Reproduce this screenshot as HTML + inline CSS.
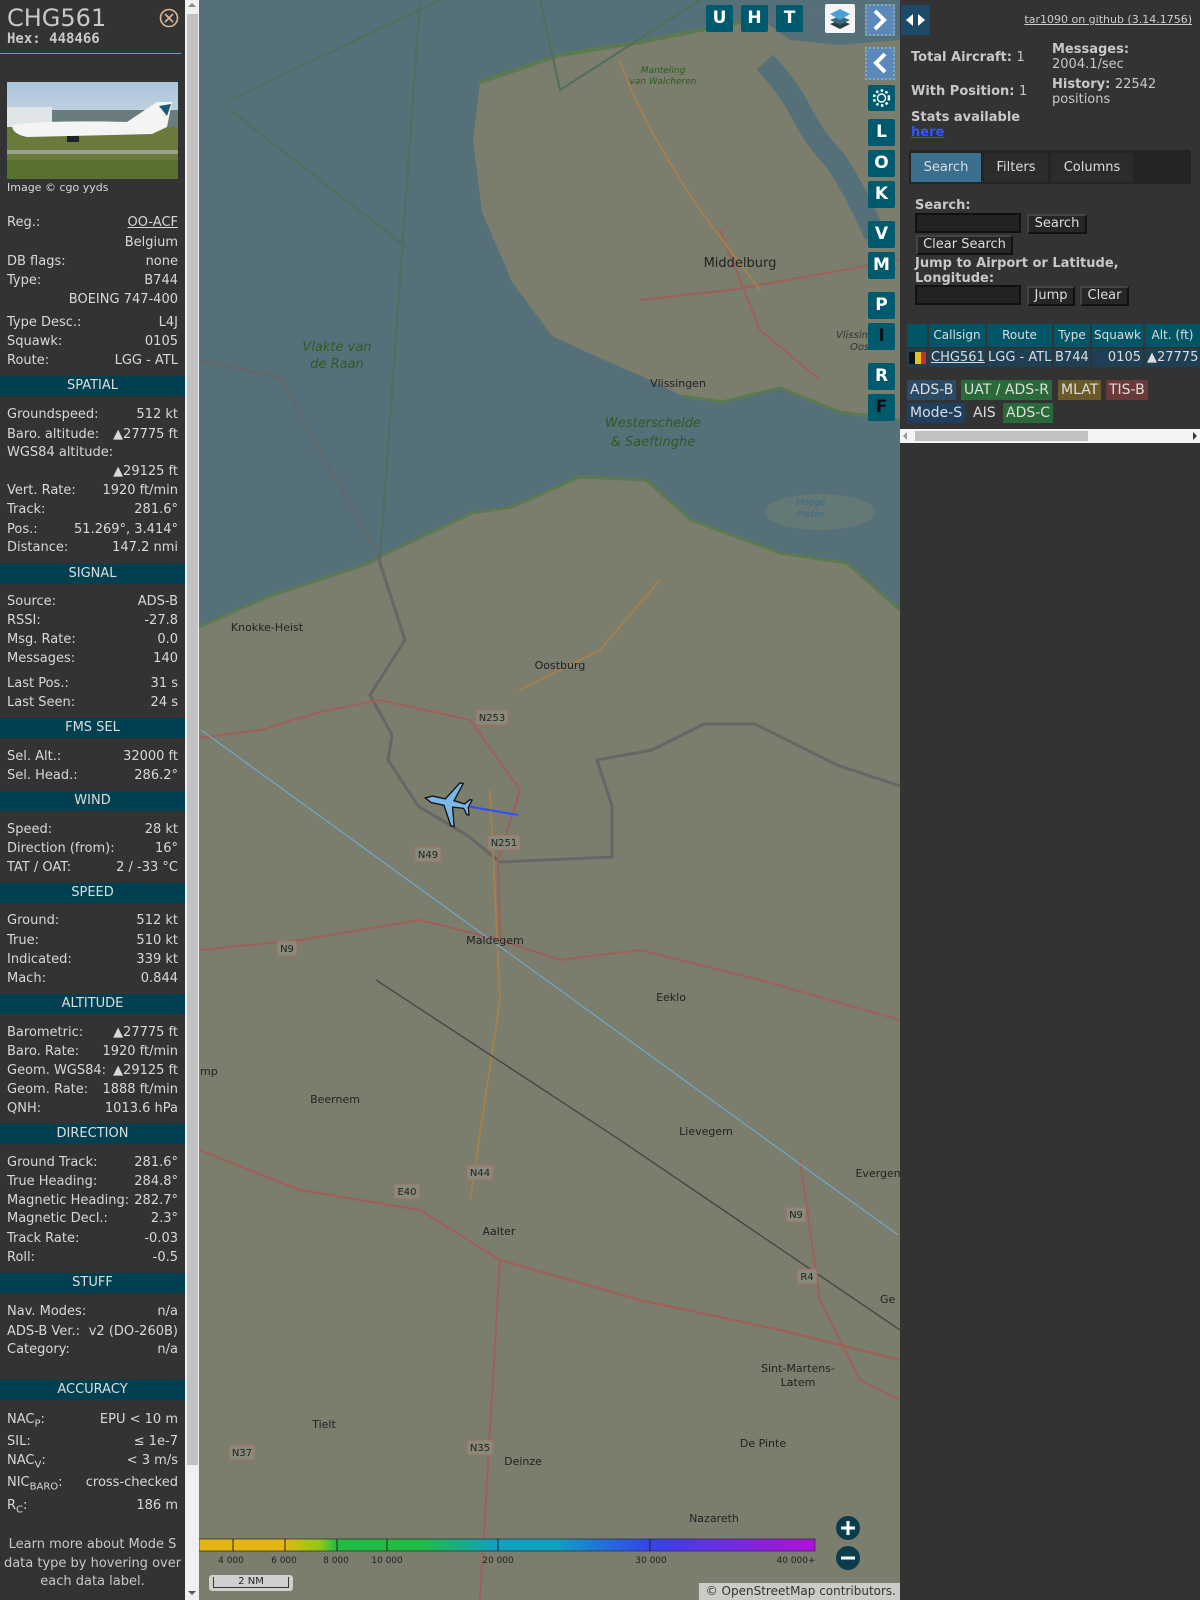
<!DOCTYPE html>
<html><head><meta charset="utf-8">
<style>
*{box-sizing:border-box;margin:0;padding:0}
body{width:1200px;height:1600px;overflow:hidden;background:#333;font-family:"DejaVu Sans","Liberation Sans",sans-serif;font-size:13px;color:#d8d8d8;position:relative}
#left{position:absolute;left:0;top:0;width:185px;height:1600px;background:#333}
#sb{position:absolute;left:185px;top:0;width:14px;height:1600px;background:#f0f0f0}
#sb .th{position:absolute;left:2px;right:1px;top:14px;height:1451px;background:#c1c1c1}
.r{position:absolute;left:7px;width:171px;height:18px;line-height:22px;white-space:nowrap}
.r b{font-weight:normal;float:right}
.h{position:absolute;left:0;width:185px;height:20px;line-height:20px;background:#004050;text-align:center;color:#ddd}
#map{position:absolute;left:199px;top:0;width:701px;height:1600px;overflow:hidden;background:#7b7d6d}
.mb{position:absolute;width:27px;height:27px;background:#005a6e;color:#fff;font-weight:bold;font-size:17px;text-align:center;line-height:27px;border-radius:2px}
#right{position:absolute;left:900px;top:0;width:300px;height:1600px;background:#333}
.bl{position:absolute;font-weight:bold;color:#c8c8c8;font-size:13px;line-height:15px}
.btn{position:absolute;background:#262626;color:#ddd;border:2px solid #111;border-top-color:#444;border-left-color:#444;font-size:13px;text-align:center;line-height:16px}
.inp{position:absolute;background:#222;border:2px solid #111;}
.badge{position:absolute;height:20px;line-height:20px;font-size:14px;color:#ddd;padding:0 3px}
.th2{position:absolute;top:324px;height:23px;line-height:23px;background:#005566;color:#ddd;text-align:center;font-size:12px}
.td{position:absolute;top:349px;height:18px;line-height:18px;background:#1f3f55;color:#ddd;font-size:13px}
</style></head><body>

<div id="left">
 <div style="position:absolute;left:7px;top:3px;font-size:24px;color:#c8c8c8;line-height:30px">CHG561</div>
 <div style="position:absolute;left:7px;top:31px;font-family:'DejaVu Sans Mono',monospace;font-weight:bold;font-size:14px;color:#c8c8c8">Hex: 448466</div>
 <svg style="position:absolute;left:159px;top:8px" width="20" height="20"><circle cx="10" cy="10" r="8.5" fill="none" stroke="#d9b896" stroke-width="1.6"/><path d="M6 6L14 14M14 6L6 14" stroke="#d9b896" stroke-width="1.6"/></svg>
 <div style="position:absolute;left:0;top:53px;width:181px;height:1px;background:#5aa0d0"></div>
 <svg style="position:absolute;left:7px;top:82px" width="171" height="97">
  <defs><linearGradient id="sky" x1="0" y1="0" x2="0" y2="1"><stop offset="0" stop-color="#aac4dc"/><stop offset="1" stop-color="#c8d6e0"/></linearGradient></defs>
  <rect width="171" height="40" fill="url(#sky)"/>
  <rect y="25" width="45" height="20" fill="#dfe4e6"/><rect x="45" y="28" width="126" height="17" fill="#6a7c7e"/>
  <rect y="45" width="171" height="52" fill="#6a7a3c"/>
  <rect y="68" width="171" height="4" fill="#9aa090"/><rect y="78" width="171" height="19" fill="#587030"/>
  <path d="M5 43 Q40 38 120 40 L150 20 L165 20 L160 45 L145 52 L20 55 Q5 52 5 43Z" fill="#f4f4f4"/>
  <path d="M152 24 L164 22 L160 34 Z" fill="#1a5a70"/>
  <rect x="60" y="54" width="12" height="6" fill="#222"/>
 </svg>
 <div style="position:absolute;left:7px;top:181px;font-size:11px;color:#d8d8d8">Image © cgo yyds</div>

 <div class="r" style="top:212px">Reg.:<b style="text-decoration:underline">OO-ACF</b></div>
 <div class="r" style="top:232px"><b>Belgium</b></div>
 <div class="r" style="top:251px">DB flags:<b>none</b></div>
 <div class="r" style="top:270px">Type:<b>B744</b></div>
 <div class="r" style="top:289px"><b>BOEING 747-400</b></div>
 <div class="r" style="top:312px">Type Desc.:<b>L4J</b></div>
 <div class="r" style="top:331px">Squawk:<b>0105</b></div>
 <div class="r" style="top:350px">Route:<b>LGG - ATL</b></div>
 <div class="h" style="top:376px">SPATIAL</div>
 <div class="r" style="top:404px">Groundspeed:<b>512 kt</b></div>
 <div class="r" style="top:424px">Baro. altitude:<b>▲27775 ft</b></div>
 <div class="r" style="top:442px">WGS84 altitude:</div>
 <div class="r" style="top:461px"><b>▲29125 ft</b></div>
 <div class="r" style="top:480px">Vert. Rate:<b>1920 ft/min</b></div>
 <div class="r" style="top:499px">Track:<b>281.6°</b></div>
 <div class="r" style="top:519px">Pos.:<b>51.269°, 3.414°</b></div>
 <div class="r" style="top:537px">Distance:<b>147.2 nmi</b></div>
 <div class="h" style="top:564px">SIGNAL</div>
 <div class="r" style="top:591px">Source:<b>ADS-B</b></div>
 <div class="r" style="top:610px">RSSI:<b>-27.8</b></div>
 <div class="r" style="top:629px">Msg. Rate:<b>0.0</b></div>
 <div class="r" style="top:648px">Messages:<b>140</b></div>
 <div class="r" style="top:673px">Last Pos.:<b>31 s</b></div>
 <div class="r" style="top:692px">Last Seen:<b>24 s</b></div>
 <div class="h" style="top:718px">FMS SEL</div>
 <div class="r" style="top:746px">Sel. Alt.:<b>32000 ft</b></div>
 <div class="r" style="top:765px">Sel. Head.:<b>286.2°</b></div>
 <div class="h" style="top:791px">WIND</div>
 <div class="r" style="top:819px">Speed:<b>28 kt</b></div>
 <div class="r" style="top:838px">Direction (from):<b>16°</b></div>
 <div class="r" style="top:857px">TAT / OAT:<b>2 / -33 °C</b></div>
 <div class="h" style="top:883px">SPEED</div>
 <div class="r" style="top:910px">Ground:<b>512 kt</b></div>
 <div class="r" style="top:930px">True:<b>510 kt</b></div>
 <div class="r" style="top:949px">Indicated:<b>339 kt</b></div>
 <div class="r" style="top:968px">Mach:<b>0.844</b></div>
 <div class="h" style="top:994px">ALTITUDE</div>
 <div class="r" style="top:1022px">Barometric:<b>▲27775 ft</b></div>
 <div class="r" style="top:1041px">Baro. Rate:<b>1920 ft/min</b></div>
 <div class="r" style="top:1060px">Geom. WGS84:<b>▲29125 ft</b></div>
 <div class="r" style="top:1079px">Geom. Rate:<b>1888 ft/min</b></div>
 <div class="r" style="top:1098px">QNH:<b>1013.6 hPa</b></div>
 <div class="h" style="top:1124px">DIRECTION</div>
 <div class="r" style="top:1152px">Ground Track:<b>281.6°</b></div>
 <div class="r" style="top:1171px">True Heading:<b>284.8°</b></div>
 <div class="r" style="top:1190px">Magnetic Heading:<b>282.7°</b></div>
 <div class="r" style="top:1208px">Magnetic Decl.:<b>2.3°</b></div>
 <div class="r" style="top:1228px">Track Rate:<b>-0.03</b></div>
 <div class="r" style="top:1247px">Roll:<b>-0.5</b></div>
 <div class="h" style="top:1273px">STUFF</div>
 <div class="r" style="top:1301px">Nav. Modes:<b>n/a</b></div>
 <div class="r" style="top:1321px">ADS-B Ver.:<b>v2 (DO-260B)</b></div>
 <div class="r" style="top:1339px">Category:<b>n/a</b></div>
 <div class="h" style="top:1380px">ACCURACY</div>
 <div class="r" style="top:1409px">NAC<sub style="font-size:10px">P</sub>:<b>EPU &lt; 10 m</b></div>
 <div class="r" style="top:1431px">SIL:<b>≤ 1e-7</b></div>
 <div class="r" style="top:1450px">NAC<sub style="font-size:10px">V</sub>:<b>&lt; 3 m/s</b></div>
 <div class="r" style="top:1472px">NIC<sub style="font-size:10px">BARO</sub>:<b>cross-checked</b></div>
 <div class="r" style="top:1495px">R<sub style="font-size:10px">C</sub>:<b>186 m</b></div>
 <div style="position:absolute;left:0;top:1536px;width:185px;text-align:center;line-height:18.5px;color:#c8c8c8">Learn more about Mode S data type by hovering over each data label.</div>
</div>
<div id="sb"><div class="th"></div>
 <div style="position:absolute;left:3px;top:3px;border:4px solid transparent;border-bottom:4px solid #888;border-top:0"></div>
 <div style="position:absolute;left:3px;top:1591px;border:4px solid transparent;border-top:4px solid #555;border-bottom:0"></div>
</div>

<div id="map">
<svg width="701" height="1600" viewBox="199 0 701 1600" style="position:absolute;left:0;top:0">
 <path d="M199 0 H900 V610 L847 563 L780 553 L691 520 L646 480 L579 477 L512 507 L472 513 L379 557 L370 563 L267 597 L199 627 Z" fill="#56707a"/>
 <path d="M480 82 L560 55 L640 42 L700 30 L760 18 L830 10 L900 6 V420 L840 412 L780 388 L722 402 L682 396 L650 380 L595 356 L552 336 L512 282 L482 212 L473 140 Z" fill="#7b7d6d"/>
 <path d="M765 62 Q790 90 800 110 Q815 140 835 160 Q855 190 875 235" fill="none" stroke="#56707a" stroke-width="22"/>
 <path d="M760 18 L830 10 L900 6 V40 L840 45 L790 40Z" fill="#56707a"/>
 <path d="M480 82 L560 55 L640 42 L700 30 L760 18" fill="none" stroke="#5c7a50" stroke-width="4"/>
 <path d="M900 420 L840 412 L780 388 L722 402 L682 396" fill="none" stroke="#5c7a50" stroke-width="3"/>
 <path d="M900 610 L847 563 L780 553 L691 520 L646 480 L579 477 L512 507 L472 513 L379 557 L370 563 L267 597 L199 627" fill="none" stroke="#5c7a50" stroke-width="3"/>
 <ellipse cx="820" cy="512" rx="55" ry="18" fill="#667a74" opacity=".9"/>
 <path d="M420 0 L380 560 M230 100 L440 0 M230 110 L410 250 M540 0 L560 90 L700 0" fill="none" stroke="#4f6e5c" stroke-width="2"/>
 <path d="M199 360 L280 378 L380 560" fill="none" stroke="#666" stroke-width="2"/>
 <path d="M378 557 L405 640 L370 695 L392 735 L388 760 L418 806 L468 836 L500 862 L612 857 L612 806 L597 760 L652 750 L704 724 L755 724 L837 765 L900 786" fill="none" stroke="#666" stroke-width="3"/>
 <path d="M199 738 L260 730 L320 712 L380 700 L470 720 L520 790 L498 860 L500 940 L560 960 L640 950 L760 980 L900 1020" fill="none" stroke="#a0605a" stroke-width="2"/>
 <path d="M199 950 L300 940 L420 920 L500 940" fill="none" stroke="#a0605a" stroke-width="2"/>
 <path d="M199 1150 L300 1190 L420 1210 L500 1260 L640 1300 L780 1330 L900 1360" fill="none" stroke="#a0605a" stroke-width="2.2"/>
 <path d="M500 1260 L480 1600 M800 1160 L820 1300 L860 1380 L900 1400" fill="none" stroke="#a0605a" stroke-width="2"/>
 <path d="M720 230 L760 330 L820 380 M640 300 L730 290 L900 260" fill="none" stroke="#a0605a" stroke-width="2"/>
 <path d="M520 690 L600 650 L660 580 M490 790 L500 1000 L470 1200" fill="none" stroke="#a8804c" stroke-width="1.8"/>
 <path d="M620 60 Q640 120 700 210 L760 290" fill="none" stroke="#a8804c" stroke-width="1.8"/>
 <path d="M376 980 L620 1140 L900 1330" fill="none" stroke="#444" stroke-width="1.3"/>
 <path d="M201 730 L898 1235" stroke="#6fb0e0" stroke-width="1"/>
 <path d="M449 803 L518 815" stroke="#3050ff" stroke-width="2"/>
 <g transform="translate(449,803) rotate(-78) scale(1.1)">
  <path d="M0 -22 L3 -16 L3 -4 L20 6 L20 9 L3 4 L2 14 L7 18 L7 20 L0 18 L-7 20 L-7 18 L-2 14 L-3 4 L-20 9 L-20 6 L-3 -4 L-3 -16 Z" fill="#7ab8e8" stroke="#111" stroke-width="1.2"/>
 </g>
 <g font-family="DejaVu Sans,sans-serif" font-size="11" fill="#222">
  <text x="740" y="267" text-anchor="middle" font-size="13">Middelburg</text>
  <text x="678" y="387" text-anchor="middle">Vlissingen</text>
  <text x="560" y="669" text-anchor="middle">Oostburg</text>
  <text x="267" y="631" text-anchor="middle">Knokke-Heist</text>
  <text x="495" y="944" text-anchor="middle">Maldegem</text>
  <text x="671" y="1001" text-anchor="middle">Eeklo</text>
  <text x="335" y="1103" text-anchor="middle">Beernem</text>
  <text x="706" y="1135" text-anchor="middle">Lievegem</text>
  <text x="499" y="1235" text-anchor="middle">Aalter</text>
  <text x="798" y="1372" text-anchor="middle">Sint-Martens-</text>
  <text x="798" y="1386" text-anchor="middle">Latem</text>
  <text x="324" y="1428" text-anchor="middle">Tielt</text>
  <text x="523" y="1465" text-anchor="middle">Deinze</text>
  <text x="763" y="1447" text-anchor="middle">De Pinte</text>
  <text x="714" y="1522" text-anchor="middle">Nazareth</text>
  <text x="880" y="1177" text-anchor="middle">Evergem</text>
  <text x="200" y="1075">mp</text>
  <text x="880" y="1303">Ge</text>
  <text x="836" y="338" font-style="italic" fill="#333" font-size="10">Vlissing</text>
  <text x="850" y="350" font-style="italic" fill="#333" font-size="10">Oos</text>
 </g>
 <g font-family="DejaVu Sans,sans-serif" font-style="italic" fill="#2e5a22" text-anchor="middle">
  <text x="337" y="351" font-size="13">Vlakte van</text>
  <text x="337" y="368" font-size="13">de Raan</text>
  <text x="653" y="427" font-size="13">Westerschelde</text>
  <text x="653" y="446" font-size="13">&amp; Saeftinghe</text>
  <text x="663" y="73" font-size="9">Manteling</text>
  <text x="663" y="84" font-size="9">van Walcheren</text>
  <text x="811" y="505" font-size="9" fill="#3a6a8a">Hooge</text>
  <text x="811" y="517" font-size="9" fill="#3a6a8a">Platen</text>
 </g>
 <g font-family="DejaVu Sans,sans-serif" font-size="10" fill="#222" text-anchor="middle">
  <g><rect x="476" y="710" width="32" height="15" rx="2" fill="#8a8a7a" stroke="#a07060"/><text x="492" y="721">N253</text></g>
  <g><rect x="488" y="835" width="32" height="15" rx="2" fill="#8a8a7a" stroke="#a07060"/><text x="504" y="846">N251</text></g>
  <g><rect x="415" y="847" width="26" height="15" rx="2" fill="#8a8a7a" stroke="#a07060"/><text x="428" y="858">N49</text></g>
  <g><rect x="277" y="941" width="20" height="15" rx="2" fill="#8a8a7a" stroke="#a07060"/><text x="287" y="952">N9</text></g>
  <g><rect x="467" y="1165" width="26" height="15" rx="2" fill="#8a8a7a" stroke="#a07060"/><text x="480" y="1176">N44</text></g>
  <g><rect x="394" y="1184" width="26" height="15" rx="2" fill="#8a8a7a" stroke="#a07060"/><text x="407" y="1195">E40</text></g>
  <g><rect x="786" y="1207" width="20" height="15" rx="2" fill="#8a8a7a" stroke="#a07060"/><text x="796" y="1218">N9</text></g>
  <g><rect x="797" y="1269" width="20" height="15" rx="2" fill="#8a8a7a" stroke="#a07060"/><text x="807" y="1280">R4</text></g>
  <g><rect x="467" y="1440" width="26" height="15" rx="2" fill="#8a8a7a" stroke="#a07060"/><text x="480" y="1451">N35</text></g>
  <g><rect x="229" y="1445" width="26" height="15" rx="2" fill="#8a8a7a" stroke="#a07060"/><text x="242" y="1456">N37</text></g>
 </g>
 <defs><linearGradient id="cs" x1="197" x2="815" gradientUnits="userSpaceOnUse">
  <stop offset="0" stop-color="#e2b714"/><stop offset=".14" stop-color="#e2b714"/><stop offset=".2" stop-color="#90c818"/><stop offset=".225" stop-color="#22bb44"/><stop offset=".36" stop-color="#22bb44"/><stop offset=".485" stop-color="#10a0c0"/><stop offset=".58" stop-color="#10a0c0"/><stop offset=".73" stop-color="#3344ee"/><stop offset="1" stop-color="#b010d8"/></linearGradient></defs>
 <rect x="199" y="1539" width="616" height="12" fill="url(#cs)" stroke="#333" stroke-width=".8"/>
 <path d="M233 1539v12M285 1539v12M337 1539v12M387 1539v12M498 1539v12M650 1539v12" stroke="#222" stroke-width="1"/>
 <g font-family="DejaVu Sans,sans-serif" font-size="9" fill="#222" text-anchor="middle">
  <text x="231" y="1563">4 000</text><text x="284" y="1563">6 000</text><text x="336" y="1563">8 000</text><text x="387" y="1563">10 000</text><text x="498" y="1563">20 000</text><text x="651" y="1563">30 000</text><text x="796" y="1563">40 000+</text>
 </g>
 <circle cx="848" cy="1528" r="12" fill="#0b3c4c"/><path d="M841 1528h14M848 1521v14" stroke="#fff" stroke-width="3"/>
 <circle cx="848" cy="1558" r="12" fill="#0b3c4c"/><path d="M841 1558h14" stroke="#fff" stroke-width="3"/>
</svg>
 <div style="position:absolute;left:10px;top:1575px;width:84px;height:16px;background:rgba(230,230,230,.8);border-radius:3px"><div style="margin:2px 4px;border:1px solid #333;border-top:0;height:11px;font-size:10px;line-height:10px;text-align:center;color:#222">2 NM</div></div>
 <div style="position:absolute;left:500px;top:1583px;width:201px;height:17px;background:rgba(230,230,230,.75);font-size:12px;line-height:17px;color:#333;text-align:right;padding-right:4px">© OpenStreetMap contributors.</div>
 <div class="mb" style="left:507px;top:5px">U</div>
 <div class="mb" style="left:542px;top:5px">H</div>
 <div class="mb" style="left:577px;top:5px">T</div>
 <div style="position:absolute;left:626px;top:4px;width:30px;height:29px;background:#f4f4f4;border-radius:2px">
  <svg width="30" height="29"><path d="M15 16 L25 20 L15 25 L5 20Z" fill="#2a3a44"/><path d="M15 12 L25 16 L15 21 L5 16Z" fill="#3a6a80"/><path d="M15 5 L25 10 L15 16 L5 10Z" fill="#4aa0d8"/></svg>
 </div>
 <div style="position:absolute;left:666px;top:4px;width:30px;height:32px;background:#5a88bb;border:2px dotted #8aa"><svg width="26" height="28"><path d="M8 5 L17 14 L8 23" fill="none" stroke="#fff" stroke-width="4"/></svg></div>
 <div style="position:absolute;left:666px;top:47px;width:30px;height:33px;background:#5a88bb;border:2px dotted #8aa"><svg width="26" height="29"><path d="M18 5 L9 14 L18 23" fill="none" stroke="#fff" stroke-width="4"/></svg></div>
 <div class="mb" style="left:669px;top:85px;height:26px"><svg width="27" height="26"><circle cx="13.5" cy="13" r="4" fill="none" stroke="#fff" stroke-width="1.4"/><circle cx="13.5" cy="13" r="7.5" fill="none" stroke="#fff" stroke-width="2.5" stroke-dasharray="2.5 2.4"/></svg></div>
 <div class="mb" style="left:669px;top:119px">L</div>
 <div class="mb" style="left:669px;top:150px">O</div>
 <div class="mb" style="left:669px;top:181px">K</div>
 <div class="mb" style="left:669px;top:221px">V</div>
 <div class="mb" style="left:669px;top:252px">M</div>
 <div class="mb" style="left:669px;top:292px">P</div>
 <div class="mb" style="left:669px;top:323px;color:#111">I</div>
 <div class="mb" style="left:669px;top:363px">R</div>
 <div class="mb" style="left:669px;top:394px;color:#111">F</div>
</div>

<div id="right">
 <div style="position:absolute;left:1px;top:5px;width:29px;height:30px;background:#1e4a6a"><svg width="29" height="30"><path d="M12 9 L5 15 L12 21Z M17 9 L24 15 L17 21Z" fill="#fff"/></svg></div>
 <div style="position:absolute;right:8px;top:13px;font-size:11px;color:#ccc;text-decoration:underline">tar1090 on github (3.14.1756)</div>
 <div class="bl" style="left:11px;top:50px">Total Aircraft: <span style="font-weight:normal">1</span></div>
 <div class="bl" style="left:11px;top:84px">With Position: <span style="font-weight:normal">1</span></div>
 <div class="bl" style="left:11px;top:110px">Stats available<br><span style="color:#3355ff;text-decoration:underline">here</span></div>
 <div class="bl" style="left:152px;top:42px">Messages:<br><span style="font-weight:normal">2004.1/sec</span></div>
 <div class="bl" style="left:152px;top:77px">History: <span style="font-weight:normal">22542<br>positions</span></div>
 <div style="position:absolute;left:9px;top:150px;width:282px;height:34px;background:#242424;border-radius:2px"></div>
 <div style="position:absolute;left:11px;top:153px;width:70px;height:29px;background:#3a6f90;color:#ddd;text-align:center;line-height:29px">Search</div>
 <div style="position:absolute;left:84px;top:153px;width:64px;height:29px;background:#2c2c2c;color:#ddd;text-align:center;line-height:29px">Filters</div>
 <div style="position:absolute;left:151px;top:153px;width:82px;height:29px;background:#2c2c2c;color:#ddd;text-align:center;line-height:29px">Columns</div>
 <div class="bl" style="left:15px;top:198px">Search:</div>
 <div class="inp" style="left:15px;top:213px;width:106px;height:20px"></div>
 <div class="btn" style="left:127px;top:214px;width:60px;height:20px">Search</div>
 <div class="btn" style="left:16px;top:235px;width:97px;height:20px">Clear Search</div>
 <div class="bl" style="left:15px;top:256px">Jump to Airport or Latitude,<br>Longitude:</div>
 <div class="inp" style="left:15px;top:285px;width:106px;height:20px"></div>
 <div class="btn" style="left:127px;top:286px;width:48px;height:20px">Jump</div>
 <div class="btn" style="left:180px;top:286px;width:49px;height:20px">Clear</div>
 <div class="th2" style="left:7px;width:20px"></div>
 <div class="th2" style="left:29px;width:56px">Callsign</div>
 <div class="th2" style="left:87px;width:65px">Route</div>
 <div class="th2" style="left:154px;width:36px">Type</div>
 <div class="th2" style="left:192px;width:51px">Squawk</div>
 <div class="th2" style="left:245px;width:55px">Alt. (ft)</div>
 <div class="td" style="left:7px;width:20px;background:#1f3f55"><span style="position:absolute;left:2px;top:3px;width:6px;height:12px;background:#111"></span><span style="position:absolute;left:8px;top:3px;width:6px;height:12px;background:#e8c020"></span><span style="position:absolute;left:14px;top:3px;width:5px;height:12px;background:#c03030"></span></div>
 <div class="td" style="left:29px;width:56px;text-decoration:underline;padding-left:2px">CHG561</div>
 <div class="td" style="left:87px;width:65px;padding-left:1px">LGG - ATL</div>
 <div class="td" style="left:154px;width:36px;padding-left:1px">B744</div>
 <div class="td" style="left:192px;width:51px;text-align:right;padding-right:2px">0105</div>
 <div class="td" style="left:245px;width:55px;padding-left:2px">▲27775</div>
 <div class="badge" style="left:7px;top:380px;background:#2b4a66">ADS-B</div>
 <div class="badge" style="left:61px;top:380px;background:#2a6a3a">UAT / ADS-R</div>
 <div class="badge" style="left:158px;top:380px;background:#6a5a2a">MLAT</div>
 <div class="badge" style="left:206px;top:380px;background:#6a3a3a">TIS-B</div>
 <div class="badge" style="left:7px;top:403px;background:#1f3f5f">Mode-S</div>
 <div class="badge" style="left:70px;top:403px">AIS</div>
 <div class="badge" style="left:103px;top:403px;background:#2a6a3a">ADS-C</div>
 <div style="position:absolute;left:0;top:429px;width:300px;height:14px;background:#f4f4f4"><div style="position:absolute;left:15px;top:2px;width:173px;height:10px;background:#c1c1c1"></div><div style="position:absolute;left:3px;top:3px;border:4px solid transparent;border-right:4px solid #999;border-left:0"></div><div style="position:absolute;right:3px;top:3px;border:4px solid transparent;border-left:4px solid #333;border-right:0"></div></div>
</div>
</body></html>
